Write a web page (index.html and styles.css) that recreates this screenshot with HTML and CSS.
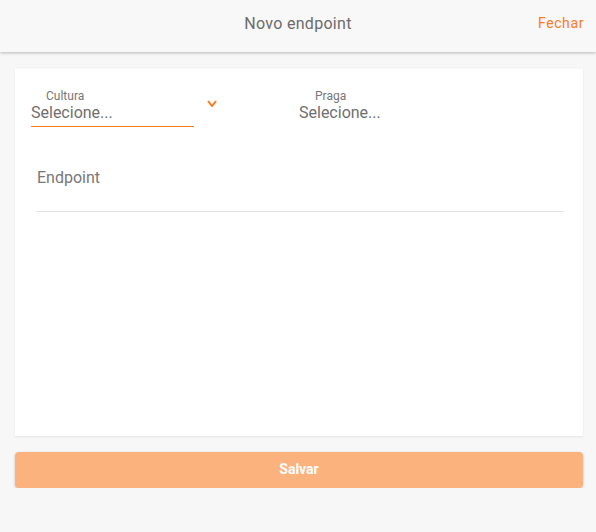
FILE: index.html
```html
<!DOCTYPE html>
<html lang="pt-BR">
<head>
    <meta charset="UTF-8">
    <meta name="viewport" content="width=device-width, initial-scale=1.0">
    <title>Novo endpoint</title>
    <link rel="stylesheet" href="styles.css">
</head>
<body>
    <header class="topbar">
        <span class="topbar-spacer"></span>
        <h1 class="topbar-title">Novo endpoint</h1>
        <a class="topbar-close" href="#">Fechar</a>
    </header>

    <main class="content">
        <section class="card">
            <div class="select-row">
                <div class="select-field select-active">
                    <label class="select-label">Cultura</label>
                    <div class="select-value">Selecione...</div>
                </div>
                <svg class="select-arrow" width="10" height="7" viewBox="0 0 10 7">
                    <polyline points="1,1 5,6 9,1" fill="none" stroke="#ff7a1a" stroke-width="2"/>
                </svg>
                <div class="select-field select-plain">
                    <label class="select-label">Praga</label>
                    <div class="select-value">Selecione...</div>
                </div>
            </div>

            <div class="text-field">
                <input type="text" placeholder="Endpoint">
            </div>
        </section>

        <button class="save-button">Salvar</button>
    </main>
</body>
</html>
```

FILE: styles.css
```css
body, html {
    margin: 0;
    padding: 0;
    font-family: 'Roboto', 'Liberation Sans', sans-serif;
    background-color: #f7f7f7;
    color: #666;
}

.topbar {
    height: 52px;
    display: flex;
    align-items: center;
    justify-content: space-between;
    background-color: #f8f8f8;
    box-shadow: 0 1px 3px rgba(0, 0, 0, 0.25);
    position: relative;
}

.topbar-spacer {
    width: 72px;
}

.topbar-title {
    margin: 0 0 6px 0;
    font-size: 16px;
    font-weight: 400;
    letter-spacing: 0.3px;
    color: #6b6b6b;
}

.topbar-close {
    width: 72px;
    box-sizing: border-box;
    padding-right: 12px;
    margin-bottom: 6px;
    text-align: right;
    font-size: 14px;
    letter-spacing: 0.6px;
    color: #ff7a1a;
    text-decoration: none;
}

.content {
    padding: 17px 13px 0 15px;
}

.card {
    height: 367px;
    background-color: white;
    box-shadow: 0 1px 2px rgba(0, 0, 0, 0.08);
    padding: 20px 20px 0 16px;
    box-sizing: border-box;
}

.select-row {
    display: flex;
    align-items: flex-start;
}

.select-field {
    display: flex;
    flex-direction: column;
}

.select-active {
    width: 163px;
    border-bottom: 1px solid #ff7a1a;
    padding-bottom: 3px;
}

.select-label {
    font-size: 12px;
    color: #777;
    line-height: 14px;
    padding-left: 15px;
}

.select-plain .select-label {
    padding-left: 16px;
}

.select-value {
    font-size: 16px;
    line-height: 20px;
    color: #6f6f6f;
}

.select-arrow {
    margin: 11px 0 0 13px;
}

.select-plain {
    margin-left: 82px;
}

.text-field {
    margin: 41px 0 0 5px;
}

.text-field input {
    width: 100%;
    border: none;
    border-bottom: 1px solid #e2e2e2;
    padding: 0 0 24px 1px;
    font-family: inherit;
    font-size: 16px;
    color: #666;
    outline: none;
    background: transparent;
}

.text-field input::placeholder {
    color: #777;
}

.save-button {
    display: block;
    width: 100%;
    height: 36px;
    margin-top: 16px;
    border: none;
    border-radius: 4px;
    background-color: #fbb27d;
    color: white;
    font-family: inherit;
    font-size: 14px;
    font-weight: 700;
    padding-bottom: 4px;
    box-shadow: 0 1px 3px rgba(0, 0, 0, 0.2);
    cursor: pointer;
}
```
